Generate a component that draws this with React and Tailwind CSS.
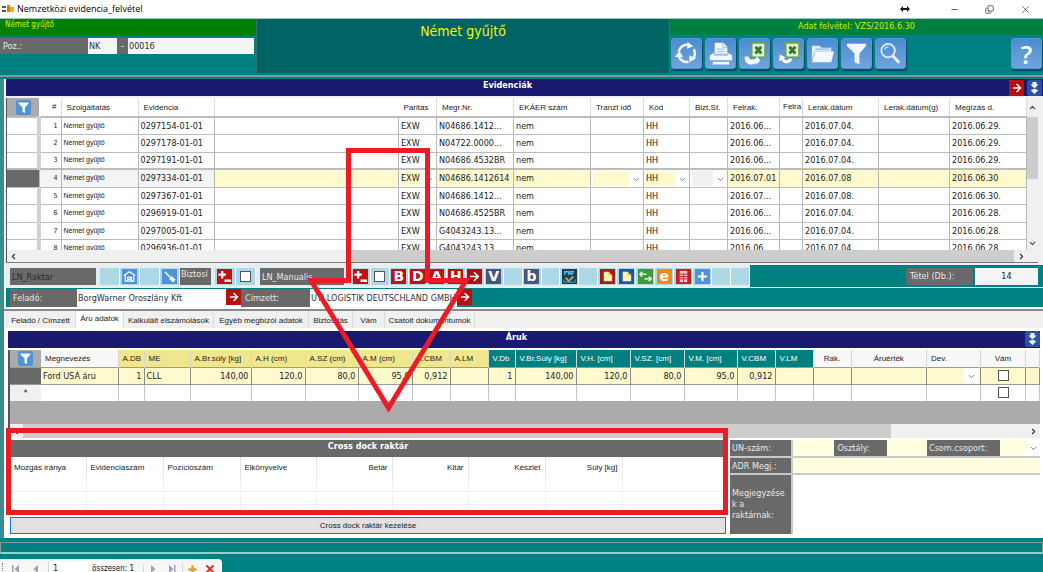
import React, { useState } from 'react';
import clsx from 'clsx';
import { ChevronDown, ChevronUp, ChevronLeft, ChevronRight, Minus, Plus, X, Copy, ArrowRight } from 'lucide-react';

const evidenceColumns = [
  { key: 'head', label: '', width: 'w-[32px]' },
  { key: 'nr', label: '#', width: 'w-[22px]' },
  { key: 'service', label: 'Szolgáltatás', width: 'w-[77px]' },
  { key: 'evidence', label: 'Evidencia', width: 'w-[76px]' },
  { key: 'blank', label: '', width: '' },
  { key: 'parity', label: 'Paritás', width: 'w-[38px]' },
  { key: 'order', label: 'Megr.Nr.', width: 'w-[77px]' },
  { key: 'ekaer', label: 'EKÁER szám', width: 'w-[77px]' },
  { key: 'transit', label: 'Tranzt idő', width: 'w-[53px]' },
  { key: 'code', label: 'Kód', width: 'w-[46px]' },
  { key: 'bizt', label: 'Bizt.St.', width: 'w-[38px]' },
  { key: 'load', label: 'Felrak.', width: 'w-[52px]' },
  { key: 'load2', label: 'Felra', width: 'w-[23px]' },
  { key: 'unload', label: 'Lerak.dátum', width: 'w-[76px]' },
  { key: 'unload2', label: 'Lerak.dátum(g)', width: 'w-[71px]' },
  { key: 'ordered', label: 'Megízás d.', width: 'w-[77px]' },
];

const evidenceRows = [
  ['0297154-01-01', 'N04686.1412...', '2016.06...', '2016.07.04.', '2016.06.29.'],
  ['0297178-01-01', 'N04722.0000...', '2016.06...', '2016.07.04.', '2016.06.29.'],
  ['0297191-01-01', 'N04686.4532BR', '2016.06...', '2016.07.04.', '2016.06.29.'],
  ['0297334-01-01', 'N04686.1412614', '2016.07.01', '2016.07.08', '2016.06.30'],
  ['0297367-01-01', 'N04686.1412...', '2016.07...', '2016.07.08.', '2016.06.30.'],
  ['0296919-01-01', 'N04686.4525BR', '2016.06...', '2016.07.04.', '2016.06.28.'],
  ['0297005-01-01', 'G4043243.13...', '2016.06...', '2016.07.04.', '2016.06.28.'],
  ['0296936-01-01', 'G4043243.13...', '2016.06...', '2016.07.04.', '2016.06.28.'],
].map(([evidence, order, load, unload, ordered], i) => ({
  nr: i + 1, service: 'Német gyűjtő', evidence, parity: 'EXW', order, ekaer: 'nem', code: 'HH', load, unload, ordered,
}));

const goodsColumns = [
  { label: 'Megnevezés', width: 'w-[77px]', value: 'Ford USA áru' },
  { label: 'A.DB', width: 'w-[26px]', value: '1', tone: 'a', right: true },
  { label: 'ME', width: 'w-[46px]', value: 'CLL', tone: 'a' },
  { label: 'A.Br.súly [kg]', width: 'w-[61px]', value: '140,00', tone: 'a', right: true },
  { label: 'A.H (cm)', width: 'w-[54px]', value: '120,0', tone: 'a', right: true },
  { label: 'A.SZ (cm)', width: 'w-[53px]', value: '80,0', tone: 'a', right: true },
  { label: 'A.M (cm)', width: 'w-[54px]', value: '95,0', tone: 'a', right: true },
  { label: 'A.CBM', width: 'w-[38px]', value: '0,912', tone: 'a', right: true },
  { label: 'A.LM', width: 'w-[38px]', value: '', tone: 'a' },
  { label: 'V.Db', width: 'w-[27px]', value: '1', tone: 'v', right: true },
  { label: 'V.Br.Súly [kg]', width: 'w-[61px]', value: '140,00', tone: 'v', right: true },
  { label: 'V.H. [cm]', width: 'w-[54px]', value: '120,0', tone: 'v', right: true },
  { label: 'V.SZ. [cm]', width: 'w-[54px]', value: '80,0', tone: 'v', right: true },
  { label: 'V.M. [cm]', width: 'w-[53px]', value: '95,0', tone: 'v', right: true },
  { label: 'V.CBM', width: 'w-[38px]', value: '0,912', tone: 'v', right: true },
  { label: 'V.LM', width: 'w-[38px]', value: '', tone: 'v' },
  { label: 'Rak.', width: 'w-[38px]', value: '', center: true },
  { label: 'Áruérték', width: '', value: '', center: true },
  { label: 'Dev.', width: 'w-[54px]', kind: 'select' },
  { label: 'Vám', width: 'w-[45px]', kind: 'check', center: true },
  { label: '', width: 'w-[14px]', value: '' },
];

const dockColumns = [
  { label: 'Mozgás iránya', width: 'w-[76px]' },
  { label: 'Evidenciaszám', width: 'w-[77px]' },
  { label: 'Pozíciószám', width: 'w-[77px]' },
  { label: 'Elkönyvelve', width: 'w-[76px]' },
  { label: 'Betár', width: 'w-[76px]', right: true },
  { label: 'Kitár', width: 'w-[76px]', right: true },
  { label: 'Készlet', width: 'w-[77px]', right: true },
  { label: 'Súly [kg]', width: 'w-[77px]', right: true },
  { label: '', width: '' },
];

const tabs = [
  { label: 'Feladó / Címzett', width: 'w-[70px]' },
  { label: 'Áru adatok', width: 'w-[48px]' },
  { label: 'Kalkulált elszámolások', width: 'w-[90px]' },
  { label: 'Egyéb megbízói adatok', width: 'w-[95px]' },
  { label: 'Biztosítás', width: 'w-[44px]' },
  { label: 'Vám', width: 'w-[32px]' },
  { label: 'Csatolt dokumentumok', width: 'w-[90px]' },
];

/* ---------- icons ---------- */

const RefreshIcon = () => (
  <svg viewBox="0 0 30 30" className="size-full" fill="none" stroke="#f4f9ff" strokeWidth="2.6">
    <path d="M7 13A8.500 8.500 0 0 1 18 6.500" />
    <path d="M22.500 10.500A8.500 8.500 0 0 1 21 21" />
    <path d="M17 23.500A8.500 8.500 0 0 1 7 18" />
    <path d="M16 3l6 4.500-6.500 2.500zM25 20l-7 4 0-7zM3 18.500l4.500-6 4 6z" fill="#f4f9ff" stroke="none" />
  </svg>
);

const PrintIcon = () => (
  <svg viewBox="0 0 30 30" className="size-full" fill="#f4f9ff">
    <path d="M9 4h9l4 4v7H9z" />
    <path d="M17.500 4v4.500H22M11 10.500h8M11 13h8" stroke="#8bb4e4" fill="none" />
    <path d="M7 15h17l3 2v5H4v-5zM7 23.500h17v3H7z" />
    <path d="M8 16.500h15" stroke="#5b93d3" />
  </svg>
);

const ExcelIcon = ({ back }) => (
  <svg viewBox="0 0 30 30" className="size-full">
    <rect x="12" y="4" width="14" height="15" fill="#e7f3dc" stroke="#6aa84f" strokeWidth="2" />
    <path d="M16 8l6 7M22 8l-6 7" stroke="#2e7d32" strokeWidth="3" />
    {back ? (
      <path d="M19 21c-2 5-8 6-11 1l-3 1 1-7 6 3-2 1c2 3 5 2 6 0z" fill="#f4f9ff" />
    ) : (
      <path d="M5 18c-1 8 6 10 12 7v2l4-5-4-5v3c-4 2-8 2-8-2z" fill="#f4f9ff" />
    )}
  </svg>
);

const FolderIcon = () => (
  <svg viewBox="0 0 30 30" className="size-full" fill="#f4f9ff">
    <path d="M4 7h8l2 2h10v4H8l-4 9z" fill="#dbe9f9" />
    <path d="M8 13h19l-3 11H4z" />
    <path d="M8 10.500h14" stroke="#7babdf" />
  </svg>
);

const FunnelIcon = () => (
  <svg viewBox="0 0 30 30" className="size-full" fill="#f4f9ff">
    <path d="M5 5h20v2l-7 8v11l-5-2v-9L5 7z" />
  </svg>
);

const MagnifierIcon = () => (
  <svg viewBox="0 0 30 30" className="size-full" fill="none" stroke="#e4eefa">
    <circle cx="12.500" cy="12" r="7" strokeWidth="1.800" />
    <path d="M9 11a4 4 0 0 1 4-3" strokeWidth="1.200" />
    <path d="M17.500 17.500L24 24.500" strokeWidth="3" />
  </svg>
);

const DoubleDown = () => (
  <svg viewBox="0 0 14 16" className="size-full" fill="#f4f9ff">
    <path d="M5 2h4v2.500h2L7 8.500 3 4.500h2zM5 9h4v1h2l-4 4-4-4h2z" />
  </svg>
);

const PlusMinus = () => (
  <svg viewBox="0 0 16 16" className="size-full" stroke="#fff" strokeWidth="2.5">
    <path d="M1.500 6h8M5.500 2v8M8 12.500h7" />
  </svg>
);

const NoteIcon = () => (
  <svg viewBox="0 0 16 16" className="size-full">
    <path d="M4 3h5l4 4v6H4z" fill="#fff3b0" />
    <path d="M9 3v4h4" fill="#f0c84a" />
  </svg>
);

const HouseIcon = () => (
  <svg viewBox="0 0 16 16" className="size-full" fill="none" stroke="#fff" strokeWidth="1.300">
    <path d="M2 7l6-4 6 4M3.500 7v6h9V7M6 13V9h4v4M6 11h4" />
  </svg>
);

const ToolIcon = () => (
  <svg viewBox="0 0 16 16" className="size-full" stroke="#fff">
    <path d="M3 3l6 6" strokeWidth="1.500" />
    <path d="M9 9l4 4" strokeWidth="4" />
  </svg>
);

const ScreenIcon = () => (
  <svg viewBox="0 0 16 16" className="size-full" fill="none">
    <path d="M3 6V3h4v3M9 6V3h4M9 5h3" stroke="#52c7ea" strokeWidth="1.500" />
    <path d="M4 9l3 4 5-5" stroke="#c9a15a" strokeWidth="2" />
    <path d="M2 11v3h12v-3" stroke="#4aa0d8" />
  </svg>
);

const SwapIcon = () => (
  <svg viewBox="0 0 16 16" className="size-full" fill="none" stroke="#fff" strokeWidth="1.500">
    <path d="M9 5.500H2M4.500 3L2 5.500 4.500 8M7 10.500h7M11.500 8l2.500 2.500-2.500 2.500" />
  </svg>
);

const ListIcon = () => (
  <svg viewBox="0 0 16 16" className="size-full">
    <rect x="4" y="2" width="8" height="12" fill="#f8c9c9" />
    <path d="M4 5.500h8M4 8h8M4 10.500h8M8 5v9" stroke="#c22" />
  </svg>
);

const AppIcon = () => (
  <svg viewBox="0 0 12 10" className="w-3 h-2.5">
    <path d="M0 2h4v2H0zM0 6h4v2H0z" fill="#555" />
    <path d="M5 1h3v7H5z" fill="#e07b10" />
    <path d="M8 3h4v5H8z" fill="#f6a821" />
  </svg>
);

/* ---------- small parts ---------- */

const HeaderButton = ({ label, children, className }) => (
  <button
    aria-label={label}
    className={clsx('size-[31px] rounded-[3px] bg-gradient-to-b from-[#4d8bd0] to-[#6ea5de] border border-[#5a96d8] shadow-[1px_2px_1px_#0b4a66] shrink-0', className)}
  >
    {children}
  </button>
);

const FilterButton = () => (
  <button aria-label="Szűrő" className="block mx-auto size-[15px] rounded-[2px] bg-[#4f92d6]">
    <FunnelIcon />
  </button>
);

const RedArrow = ({ label }) => (
  <button aria-label={label} className="w-[15px] h-4 bg-[#b80f0f] text-white flex items-center justify-center shrink-0">
    <ArrowRight size={12} strokeWidth={3} />
  </button>
);

const MiniSelect = ({ label, value = '', fill = 'bg-[#fffacd]' }) => (
  <div className="relative h-[15px] bg-white">
    <select aria-label={label} defaultValue={value} className={clsx('appearance-none block w-[calc(100%-14px)] h-full outline-none', fill)}>
      <option>{value}</option>
    </select>
    <ChevronDown size={9} className="absolute right-0.5 top-1 text-gray-600 pointer-events-none" />
  </div>
);

const Label = ({ children, className, htmlFor }) => (
  <label htmlFor={htmlFor} className={clsx('bg-[#696969] text-[#e8e8e8] shrink-0', className)}>
    {children}
  </label>
);

const SectionBar = ({ title, children }) => (
  <div className="flex h-[17px] bg-[#191970]">
    <h2 className="flex-1 text-center text-white font-bold text-[9px] leading-3">{title}</h2>
    {children}
  </div>
);

const BlueDown = () => (
  <button aria-label="Lenyitás" className="w-[15px] h-4 rounded-[2px] bg-[#2c52a8] shrink-0">
    <DoubleDown />
  </button>
);

/* ---------- sections ---------- */

const TitleBar = () => (
  <header className="flex items-center h-[18px] bg-white pl-0.5 pr-3">
    <AppIcon />
    <span className="ml-[3px] flex-1 text-[9px] text-black font-['Open_Sans',sans-serif]">Nemzetközi evidencia_felvétel</span>
    <svg viewBox="0 0 10 6" className="w-2.5 h-1.5 mr-10">
      <path d="M0 3l3-3v2h4V0l3 3-3 3V4H3v2z" fill="#111" />
    </svg>
    <button aria-label="Kis méret" className="mr-[26px]"><Minus size={9} /></button>
    <button aria-label="Visszaállítás" className="mr-[26px]"><Copy size={9} className="-scale-y-100" /></button>
    <button aria-label="Bezárás"><X size={11} strokeWidth={1.5} /></button>
  </header>
);

const TopPanel = () => (
  <div className="flex h-14 border-t border-[#9cc7c7]">
    <div className="w-64 shrink-0">
      <div className="h-[17px] bg-[#008000] text-[#d8f000] text-[8px] leading-3 pl-[5px]">Német gyűjtő</div>
      <div className="flex h-4 mt-0.5 text-[9px]">
        <Label htmlFor="poz" className="w-[88px] pl-[3px] leading-4">Poz.:</Label>
        <input id="poz" defaultValue="NK" className="w-[29px] bg-[#f4f4f4] px-px leading-3" />
        <span className="w-[11px] bg-[#696969] text-white text-center leading-4">-</span>
        <input aria-label="Pozíciószám" defaultValue="00016" className="flex-1 min-w-0 bg-[#f4f4f4] px-px mr-0.5 leading-3" />
      </div>
    </div>
    <div className="flex-1 bg-[#006464] border-x border-b border-[#3b7070] text-center">
      <h1 className="text-[#f4f400] text-[14px] leading-6">Német gyűjtő</h1>
    </div>
    <div className="w-[373px] shrink-0">
      <div className="h-4 bg-[#008040] text-[#c8f000] text-[9px] leading-[14px] text-center">Adat felvétel: VZS/2016.6.30</div>
      <div className="flex gap-[3px] pt-[3px] pl-px pr-px">
        <HeaderButton label="Frissítés"><RefreshIcon /></HeaderButton>
        <HeaderButton label="Nyomtatás"><PrintIcon /></HeaderButton>
        <HeaderButton label="Excel export"><ExcelIcon /></HeaderButton>
        <HeaderButton label="Excel import"><ExcelIcon back /></HeaderButton>
        <HeaderButton label="Megnyitás"><FolderIcon /></HeaderButton>
        <HeaderButton label="Szűrés"><FunnelIcon /></HeaderButton>
        <HeaderButton label="Keresés"><MagnifierIcon /></HeaderButton>
        <HeaderButton label="Súgó" className="ml-auto text-white text-[26px] leading-7 font-['Open_Sans',sans-serif] font-semibold">?</HeaderButton>
      </div>
    </div>
  </div>
);

const selectKeys = ['parity', 'transit', 'code', 'bizt'];

const EvidenceTable = () => (
  <div className="border-l border-[#555] bg-white">
    <div className="flex h-[152px] overflow-hidden">
      <div className="flex-1 min-w-0 overflow-hidden">
        <table className="w-full table-fixed border-collapse text-[9px] text-[#222]">
          <colgroup>
            {evidenceColumns.map((c) => <col key={c.key} className={c.width} />)}
          </colgroup>
          <thead>
            <tr className="h-[19px] border-b-2 border-[#bdbdbd]">
              {evidenceColumns.map((c, i) => (
                <th
                  key={c.key}
                  className={clsx(
                    "p-0 font-normal whitespace-nowrap overflow-hidden text-[8px] leading-3 border-[#dcdcdc] font-['Liberation_Sans',sans-serif]",
                    i === 0 && 'bg-[#ababab]',
                    c.key === 'nr' && 'text-right pr-1',
                    c.key === 'load2' && 'text-left pl-[3px]',
                    i > 1 && c.key !== 'load2' && 'text-left pl-[5px] pt-0.5',
                    c.key !== 'blank' && c.key !== 'head' && 'border-r'
                  )}
                >
                  {i === 0 ? <FilterButton /> : c.label}
                </th>
              ))}
            </tr>
          </thead>
          <tbody>
            {evidenceRows.map((row) => {
              const active = row.nr === 4;
              return (
                <tr key={row.nr} className={clsx('h-[17px] even:h-[18px] border-b border-[#bcbcbc]', active && 'border-y-2 border-[#9a9a9a]')}>
                  {evidenceColumns.map((c) => (
                    <td
                      key={c.key}
                      className={clsx(
                        'p-0 pl-0.5 leading-3 whitespace-nowrap overflow-hidden border-r border-[#b8b8b8]',
                        c.key === 'head' && (active ? 'bg-[#696969]' : 'border-r-4 border-r-[#d0d0d0]'),
                        c.key === 'nr' && 'text-right pr-[3px] text-[7px]',
                        c.key === 'service' && "text-[7px] font-['Liberation_Sans',sans-serif]",
                        active && ['nr', 'service', 'evidence'].includes(c.key) && 'bg-[#f4f4f4]',
                        active && !['head', 'nr', 'service', 'evidence', ...selectKeys].includes(c.key) && 'bg-[#fffacd]'
                      )}
                    >
                      {active && selectKeys.includes(c.key) ? (
                        <MiniSelect label={c.label} value={row[c.key] || ''} fill={c.key === 'bizt' ? 'bg-[#f0f0f0]' : undefined} />
                      ) : row[c.key]}
                    </td>
                  ))}
                </tr>
              );
            })}
          </tbody>
        </table>
      </div>
      <div className="w-[11px] bg-[#f0f0f0] flex flex-col items-center text-[#444] shrink-0">
        <ChevronUp size={9} strokeWidth={3} className="my-[5px]" />
        <div className="w-full h-[62px] bg-[#cdcdcd]" />
        <ChevronDown size={9} strokeWidth={3} className="mt-auto mb-0.5" />
      </div>
    </div>
    <div className="flex items-center h-[13px] bg-[#f0f0f0] text-[#333] border-b border-[#777]">
      <ChevronLeft size={9} strokeWidth={3} className="ml-0.5 mr-[334px]" />
      <div className="flex-1 h-full bg-[#cdcdcd]" />
      <ChevronRight size={9} strokeWidth={3} className="ml-[3px] mr-3" />
    </div>
  </div>
);

const letter = (ch, bg) => ({ label: ch, bg, node: ch });

const stripButtons = [
  { label: 'Hozzáad / töröl', bg: 'bg-[#c01010]', node: <PlusMinus /> },
  { check: true },
  letter('B', 'bg-[#c01010]'),
  letter('D', 'bg-[#c01010]'),
  letter('A', 'bg-[#c01010]'),
  letter('H', 'bg-[#c01010]'),
  { label: 'Tovább', bg: 'bg-[#b01010]', node: <ArrowRight size={13} strokeWidth={3} /> },
  letter('V', 'bg-[#46567c]'),
  null,
  letter('b', 'bg-[#46567c]'),
  null,
  { label: 'Képernyő', bg: 'bg-[#1d3d5c]', node: <ScreenIcon /> },
  null,
  { label: 'Jegyzet', bg: 'bg-[#b01818]', node: <NoteIcon /> },
  { label: 'Másolat', bg: 'bg-[#1c5aa0]', node: <NoteIcon /> },
  { label: 'Csere', bg: 'bg-[#3f9a3a]', node: <SwapIcon /> },
  letter('e', 'bg-[#f08a1c]'),
  { label: 'Lista', bg: 'bg-[#d01818]', node: <ListIcon /> },
  { label: 'Új', bg: 'bg-[#4f92d6]', node: <Plus size={13} strokeWidth={4} /> },
  null,
  null,
];

const Check = ({ label, className }) => (
  <input type="checkbox" aria-label={label} className={clsx('appearance-none block size-[11px] bg-white border border-[#555]', className)} />
);

const IconCell = ({ item }) => (
  <div className="flex-1 h-[17px] bg-[#add8e6] border-r border-white flex items-center justify-center">
    {item?.check && <Check label="Kijelölés" />}
    {item?.node && (
      <button
        aria-label={item.label}
        className={clsx("size-[15px] flex items-center justify-center text-white font-bold text-[14px] leading-[15px] font-['DejaVu_Sans',sans-serif]", item.bg)}
      >
        {item.node}
      </button>
    )}
  </div>
);

const ToolStrip = () => (
  <div className="flex items-center h-[22px] text-[9px] bg-[#008080]">
    <div className="flex items-center h-full bg-[#e4eef0] pl-1 w-[744px] shrink-0">
      <span className="w-[86px] h-[17px] bg-[#696969] text-[#2a2a2a] pl-0.5 leading-[19px]">LN_Raktar</span>
      <div className="flex w-20 ml-1">
        <IconCell />
        <IconCell item={{ label: 'Raktár', bg: 'bg-[#4f92d6]', node: <HouseIcon /> }} />
        <IconCell />
        <IconCell item={{ label: 'Eszköz', bg: 'bg-[#4f92d6]', node: <ToolIcon /> }} />
      </div>
      <Label className="w-[31px] h-[17px] leading-3 pl-px whitespace-nowrap">Biztosí</Label>
      <div className="flex w-[41px] ml-1">
        <IconCell item={{ label: 'Hozzáad', bg: 'bg-[#c01010]', node: <PlusMinus /> }} />
        <IconCell item={{ check: true }} />
      </div>
      <Label className="w-[84px] h-[17px] leading-[19px] pl-0.5 ml-1">LN_Manualis</Label>
      <div className="flex flex-1 ml-2">
        {stripButtons.map((item, i) => <IconCell key={i} item={item} />)}
      </div>
    </div>
    <div className="flex ml-auto mr-[5px]">
      <Label htmlFor="count" className="w-[67px] h-[17px] leading-[17px] pl-1">Tétel (Db.):</Label>
      <input id="count" readOnly value="14" className="w-[63px] h-[17px] ml-0.5 bg-[#f4f4f4] text-center text-[#222] leading-3" />
    </div>
  </div>
);

const AddressRow = () => (
  <div className="flex bg-[#008080] h-[19px] pl-1 pt-px mt-px text-[9px]">
    <Label htmlFor="sender" className="w-[67px] pl-[3px] leading-[19px]">Feladó:</Label>
    <input id="sender" defaultValue="BorgWarner Oroszlány Kft" className="w-[148px] bg-white px-px leading-4" />
    <div className="bg-white pl-px"><RedArrow label="Feladó megnyitása" /></div>
    <Label htmlFor="recipient" className="w-[69px] pl-1 leading-[19px]">Címzett:</Label>
    <input id="recipient" defaultValue="UTI LOGISTIK DEUTSCHLAND GMBH" className="w-[147px] bg-white px-px leading-4" />
    <RedArrow label="Címzett megnyitása" />
  </div>
);

const TabBar = ({ current, onSelect }) => (
  <div role="tablist" className="flex h-[19px] pl-0.5 bg-[#f0f0f0] border-t-2 border-[#8a8a8a] text-[8px] font-['Liberation_Sans',sans-serif] text-[#222]">
    {tabs.map((t) => (
      <button
        key={t.label}
        role="tab"
        aria-selected={current === t.label}
        onClick={() => onSelect(t.label)}
        className={clsx('shrink-0 whitespace-nowrap text-center border-r border-[#dcdcdc]', t.width, current === t.label ? 'bg-white pb-0.5' : 'pt-0.5')}
      >
        {t.label}
      </button>
    ))}
  </div>
);

const GoodsTable = () => (
  <div className="border-l-2 border-[#555] bg-[#ababab]">
    <table className="w-full table-fixed border-collapse text-[9px] text-[#222] bg-white">
      <colgroup>
        <col className="w-[31px]" />
        {goodsColumns.map((c, i) => <col key={i} className={c.width} />)}
      </colgroup>
      <thead>
        <tr className="h-[17px]">
          <th className="p-0 bg-[#ababab]"><FilterButton /></th>
          {goodsColumns.map((c, i) => (
            <th
              key={i}
              className={clsx(
                "p-0 pt-0.5 font-normal whitespace-nowrap overflow-hidden text-[8px] leading-3 border-r border-[#d4d4d4] font-['Liberation_Sans',sans-serif]",
                c.tone === 'a' && 'bg-[#f0e68c]',
                c.tone === 'v' && 'bg-[#008080] text-white',
                !c.tone && 'bg-[#f8f8f8]',
                c.center ? 'text-center' : 'text-left pl-1'
              )}
            >
              {c.label}
            </th>
          ))}
        </tr>
      </thead>
      <tbody>
        <tr className="h-[17px] border-y border-[#9a9a9a]">
          <td className="p-0 bg-[#696969]" />
          {goodsColumns.map((c, i) => (
            <td key={i} className={clsx('p-0 px-0.5 leading-3 whitespace-nowrap overflow-hidden bg-[#fffacd] border-r border-[#8a8a8a]', c.right && 'text-right')}>
              {c.kind === 'select' && <MiniSelect label={c.label} />}
              {c.kind === 'check' && <Check label="Vám" className="mx-auto" />}
              {c.value}
            </td>
          ))}
        </tr>
        <tr className="h-[17px]">
          <td className="p-0 bg-[#f0f0f0] text-center leading-3">*</td>
          {goodsColumns.map((c, i) => (
            <td key={i} className="p-0 border-r border-[#c4c4c4]">
              {c.kind === 'check' && <Check label="Vám, új sor" className="mx-auto" />}
            </td>
          ))}
        </tr>
      </tbody>
    </table>
    <div className="h-[23px]" />
    <div className="flex items-center h-[14px] bg-[#f0f0f0] text-[#333]">
      <ChevronLeft size={9} strokeWidth={3} className="mx-0.5" />
      <div className="flex-1 h-full bg-[#cdcdcd]" />
      <ChevronRight size={9} strokeWidth={3} className="ml-[138px] mr-0.5" />
    </div>
  </div>
);

const CrossDock = () => (
  <div className="flex-1 min-w-0 flex flex-col">
    <h3 className="h-[17px] bg-[#696969] text-white font-bold text-[9px] leading-3 text-center">Cross dock raktár</h3>
    <div className="h-[57px] overflow-hidden bg-white">
      <table className="w-full table-fixed border-collapse text-[8px] text-[#222] font-['Liberation_Sans',sans-serif]">
        <colgroup>
          {dockColumns.map((c, i) => <col key={i} className={c.width} />)}
        </colgroup>
        <thead>
          <tr className="h-[21px]">
            {dockColumns.map((c, i) => (
              <th key={i} className={clsx('p-0 px-1 font-normal border-r border-[#e4e4e4]', c.right ? 'text-right' : 'text-left')}>{c.label}</th>
            ))}
          </tr>
        </thead>
        <tbody>
          {[0, 1, 2].map((r) => (
            <tr key={r} className="h-[13px] border-b border-[#f0f0f0]">
              {dockColumns.map((c, i) => <td key={i} className="p-0 border-r border-[#f0f0f0]" />)}
            </tr>
          ))}
        </tbody>
      </table>
    </div>
    <button className="mt-[3px] h-[17px] border border-[#1078d0] bg-[#e1e1e1] text-[8px] leading-3 text-[#222] font-['Liberation_Sans',sans-serif]">
      Cross dock raktár kezelése
    </button>
  </div>
);

const AdrPanel = () => (
  <div className="w-[310px] shrink-0 ml-1 flex flex-col gap-0.5 text-[9px] bg-[#c8c8c8]">
    <div className="flex h-4">
      <Label htmlFor="un" className="w-[61px] pl-0.5 leading-4">UN-szám:</Label>
      <input id="un" className="flex-1 min-w-0 bg-[#ffffe0] ml-0.5" />
      <Label htmlFor="class" className="w-[53px] pl-1 leading-4">Osztály:</Label>
      <input id="class" className="flex-1 min-w-0 bg-[#ffffe0]" />
      <Label htmlFor="group" className="w-[73px] pl-0.5 leading-4">Csom.csoport:</Label>
      <div className="relative w-10 bg-white">
        <select id="group" className="appearance-none block w-[25px] h-full bg-[#ffffe0]"><option></option></select>
        <ChevronDown size={9} className="absolute right-0.5 top-1 text-gray-600 pointer-events-none" />
      </div>
    </div>
    <div className="flex h-[15px]">
      <Label htmlFor="adr" className="w-[61px] pl-0.5 leading-4">ADR Megj.:</Label>
      <input id="adr" className="flex-1 min-w-0 bg-[#ffffe0] ml-0.5" />
    </div>
    <div className="flex flex-1">
      <Label htmlFor="note" className="w-[61px] pl-0.5 flex items-center leading-[11px]">
        <span>Megjegyzése<br />k a<br />raktárnak:</span>
      </Label>
      <textarea id="note" className="flex-1 min-w-0 bg-white ml-0.5 resize-none" />
    </div>
  </div>
);

const Navigator = () => (
  <div className="flex items-center h-5 w-[222px] bg-[#f6f6f6] rounded-tr text-[9px] text-[#222] mt-[5px] whitespace-nowrap">
    <span className="w-1 h-3 ml-0.5 border-l border-dotted border-gray-500" />
    <button aria-label="Első" className="ml-1.5 text-gray-400"><svg viewBox="0 0 8 8" className="size-2" fill="currentColor"><path d="M0 0h1.500v8H0zM7 0v8L2.500 4z" /></svg></button>
    <button aria-label="Előző" className="ml-3 text-gray-400"><svg viewBox="0 0 8 8" className="size-2" fill="currentColor"><path d="M6 0v8L1.500 4z" /></svg></button>
    <input aria-label="Aktuális" defaultValue="1" className="w-10 ml-2 pl-1 bg-white border-l border-gray-300" />
    <span className="ml-1 text-[8px]">összesen: 1</span>
    <button aria-label="Következő" className="ml-auto pl-1.5 border-l border-gray-300 text-gray-400"><svg viewBox="0 0 8 8" className="size-2" fill="currentColor"><path d="M1 0v8l4.500-4z" /></svg></button>
    <button aria-label="Utolsó" className="ml-2.5 text-gray-400"><svg viewBox="0 0 8 8" className="size-2" fill="currentColor"><path d="M6 0h1.500v8H6zM1 0v8l4.500-4z" /></svg></button>
    <button aria-label="Új" className="ml-1.5 pl-1 border-l border-gray-300 text-[#d9a520]"><Plus size={11} strokeWidth={5} /></button>
    <button aria-label="Törlés" className="ml-1.5 mr-1.5 text-[#e03020]"><X size={12} strokeWidth={4} /></button>
  </div>
);

const Annotations = () => (
  <svg className="absolute left-0 top-0 pointer-events-none" width="1043" height="572" fill="none" stroke="#ed1c24" strokeWidth="5">
    <path d="M348.500 280.500V150.500H427.500V280.500H466L388.500 408L311 280.500Z" />
    <rect x="8.500" y="430.500" width="717" height="82" />
  </svg>
);

export default function App() {
  const [tab, setTab] = useState('Áru adatok');

  return (
    <div className="relative h-screen overflow-hidden bg-[#008080] font-['DejaVu_Sans_Condensed','DejaVu_Sans',sans-serif] text-[#333]">
      <TitleBar />
      <TopPanel />
      <main className="mt-px border-t-2 border-[#7f9a9a]">
        <div className="border-l-4 border-[#3c8c8c] mt-0.5">
          <div className="pl-0.5 bg-[#f0f0f0]">
            <SectionBar title="Evidenciák">
              <div className="flex items-start gap-[3px] pt-px pr-px">
                <RedArrow label="Tovább" />
                <BlueDown />
              </div>
            </SectionBar>
            <div className="pt-0.5 mr-[5px]"><EvidenceTable /></div>
            <div className="pt-0.5"><ToolStrip /></div>
            <AddressRow />
          </div>
          <div className="pt-0.5 bg-white">
            <TabBar current={tab} onSelect={setTab} />
            <div className="pl-1 pr-[3px] pt-[3px]">
              <SectionBar title="Áruk"><BlueDown /></SectionBar>
              <div className="pt-0.5"><GoodsTable /></div>
              <div className="flex pt-0.5 pb-1 pl-0.5">
                <CrossDock />
                <AdrPanel />
              </div>
            </div>
          </div>
        </div>
      </main>
      <div className="mt-1 h-3 border border-[#7f9a9a] border-b-2 border-b-[#9fcaca]" />
      <Navigator />
      <Annotations />
    </div>
  );
}
